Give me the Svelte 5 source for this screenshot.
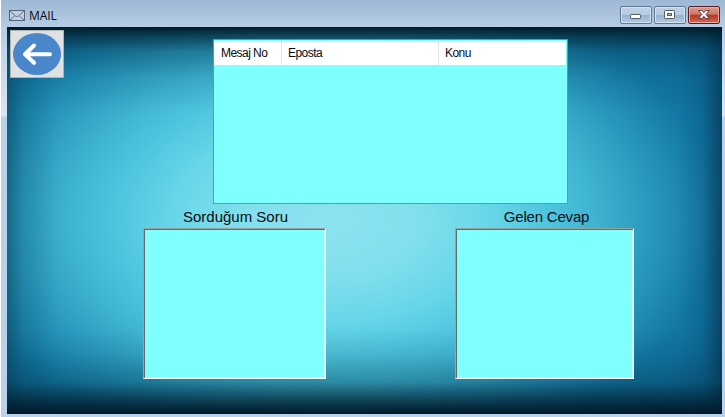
<script>
  const columns = ['Mesaj No', 'Eposta', 'Konu'];
</script>

<div class="window">
  <header class="titlebar">
    <svg class="mail" width="16" height="11" viewBox="0 0 16 11">
      <rect x=".5" y=".5" width="15" height="10" fill="#bfd0e0" stroke="#52677c" />
      <path d="M1 1l5.5 5q1.5 1.2 3 0L15 1M1 10l5-4.5M15 10l-5-4.5" fill="none" stroke="#60758a" />
    </svg>
    <span class="title">MAIL</span>
    <div class="controls">
      <button aria-label="Minimize"><svg width="30" height="16" viewBox="0 0 30 16"><rect x="9.5" y="7.5" width="10" height="4" rx=".7" fill="#fff" stroke="#565c65" /></svg></button>
      <button aria-label="Maximize"><svg width="30" height="16" viewBox="0 0 30 16"><rect x="9.5" y="3.5" width="10" height="8" rx=".7" fill="#fff" stroke="#565c65" /><rect x="12.5" y="6.5" width="4" height="2" fill="#a9c2dc" stroke="#565c65" /></svg></button>
      <button class="close" aria-label="Close"><svg width="30" height="16" viewBox="0 0 30 16"><path d="M9.500 3.500h3.400l2 2.200 2-2.200h3.400l-3.300 4 3.300 4h-3.400l-2-2.200-2 2.200H9.500l3.300-4z" fill="#fff" stroke="#5c464b" stroke-linejoin="round" /></svg></button>
    </div>
  </header>
  <main class="client">
    <div class="upper">
      <button class="back" aria-label="Geri">
        <svg width="48" height="42" viewBox="0 0 48 42">
          <ellipse cx="24" cy="21" rx="24" ry="21" fill="#4a86ca" />
          <path d="M37 21.300H12.500M21 12.500L12 21.300l9 8.500" fill="none" stroke="#fff" stroke-width="4" stroke-linecap="round" stroke-linejoin="round" />
        </svg>
      </button>
      <div class="list">
        <div class="head">
          {#each columns as column}
            <span>{column}</span>
          {/each}
        </div>
      </div>
    </div>
    <div class="lower">
      <section>
        <h2>Sorduğum Soru</h2>
        <div class="box"></div>
      </section>
      <section>
        <h2 class="answer">Gelen Cevap</h2>
        <div class="box"></div>
      </section>
    </div>
  </main>
</div>

<style>
  .window {
    box-sizing: border-box;
    width: 725px;
    height: 417px;
    padding: 0 3px 3px 7px;
    overflow: hidden;
    background:
      linear-gradient(#fff, #fff) 0 0 / 1px 100% no-repeat,
      linear-gradient(#9db7d4 0, #b7cde5 27px, #d9e6f5 115px, #b9d1ea 118px, #b9d1ea 100%);
    font-family: "Liberation Sans", Arial, sans-serif;
    color: #080c10;
  }
  .titlebar {
    display: flex;
    height: 27px;
  }
  .mail { margin: 10px 0 0 2px; }
  .title {
    margin: 7px 0 0 4px;
    font: 12px/17px "Open Sans", sans-serif;
    letter-spacing: -.1px;
  }
  .controls {
    display: flex;
    gap: 2px;
    margin: 6px 2px 0 auto;
  }
  .controls button {
    box-sizing: border-box;
    width: 32px;
    height: 18px;
    padding: 0;
    border: 1px solid #61788f;
    border-radius: 2px;
    background: linear-gradient(#c1d3e6 0, #b5cbe1 48%, #98b3cf 52%, #b0cae4 100%);
    box-shadow: inset 0 0 0 1px #d4e2f0;
  }
  .controls .close {
    border-color: #571e25;
    background: linear-gradient(#dc9b90 0, #cf7568 45%, #b83825 52%, #cf6b51 100%);
    box-shadow: inset 0 0 0 1px #e6aca3;
  }
  svg { display: block; }
  .client {
    height: 387px;
    background:
      linear-gradient(#001b27 0, rgba(0, 35, 48, .72) 9px, rgba(0, 50, 70, .36) 24px, rgba(0, 65, 95, .12) 50px, transparent 85px),
      linear-gradient(to top, #001927 0, rgba(0, 28, 43, .75) 12px, rgba(0, 50, 70, .32) 32px, rgba(0, 55, 80, .1) 60px, transparent 85px),
      linear-gradient(to right, rgba(0, 45, 60, .42) 0, rgba(0, 55, 75, .18) 16px, transparent 50px),
      linear-gradient(to left, rgba(0, 25, 50, .5) 0, rgba(0, 45, 75, .15) 20px, transparent 45px),
      radial-gradient(ellipse 400px 255px at 325px 193px, #8de2f1 0, #82dfed 22%, #66d6e8 40%, #4ec5de 54%, #3eb3d0 66%, #2593ba 82%, #1277a4 96%, #0e6d9c 110%);
  }
  .upper {
    display: flex;
    align-items: flex-start;
    height: 177px;
  }
  .back {
    box-sizing: border-box;
    width: 54px;
    height: 48px;
    margin: 3px 0 0 3px;
    padding: 2px;
    border: 1px solid #aeb3b6;
    background: #e0e1e2;
  }
  .list {
    box-sizing: border-box;
    width: 355px;
    height: 165px;
    margin: 12px 0 0 149px;
    border: 1px solid #6c949c;
    background: #80ffff;
    padding: 1px 1px 0 0;
  }
  .head {
    display: grid;
    grid-template-columns: 68px 157px 1fr;
    height: 24px;
    background: #fff;
    font-size: 12px;
    line-height: 25px;
    letter-spacing: -.55px;
  }
  .head span {
    padding-left: 7px;
    border-right: 1px solid #e0e4e8;
  }
  .head span:nth-child(n + 2) {
    padding-left: 6px;
  }
  .head span:last-child {
    border: 0;
  }
  .lower {
    display: grid;
    grid-template-columns: 183px 179px;
    column-gap: 129px;
    padding-left: 136px;
  }
  h2 {
    height: 24px;
    margin: 0;
    padding-left: 2px;
    text-align: center;
    font-size: 15px;
    font-weight: 400;
    line-height: 26px;
  }
  .answer {
    padding-left: 4px;
    letter-spacing: -.2px;
  }
  .box {
    box-sizing: border-box;
    height: 151px;
    border: 1px solid;
    border-color: #a0a0a0 #fff #fff #a0a0a0;
    background: #80ffff;
    box-shadow: inset 1px 1px #696969, inset -1px -1px #d7eeee;
  }
</style>
